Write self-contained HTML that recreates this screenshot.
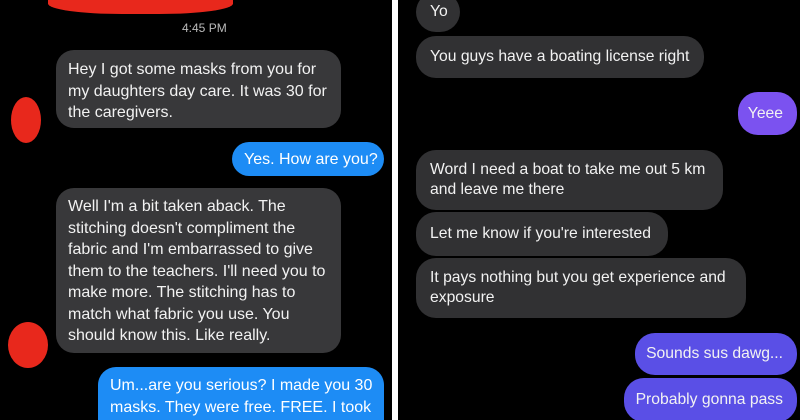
<!DOCTYPE html>
<html><head><style>
body{margin:0;width:800px;height:420px;overflow:hidden;background:#fff;font-family:"Liberation Sans",sans-serif;position:relative}
.p{position:absolute;top:0;height:420px;background:#000;overflow:hidden}
.b{position:absolute;color:#f2f2f2;font-size:15.7px;line-height:21.5px;box-sizing:border-box;white-space:nowrap}
.g{background:#38383a;border-radius:18px;padding:9px 12px;font-size:16px}
.bl{background:#1d8cf5;border-radius:18px;padding:6px 12px;color:#fff;font-size:16px}
.pg{background:#313133;border-radius:20px;padding:0 14px;display:flex;align-items:center}
.pu{background:#5a4fe6;border-radius:20px;padding:0 14px;display:flex;align-items:center;justify-content:flex-end}
.red{position:absolute;background:#e8281c;border-radius:50%}
</style></head><body>
<div class="p" style="left:0;width:392px">
 <div class="red" style="left:48px;top:-12px;width:185px;height:26px;border-radius:40%"></div>
 <div style="position:absolute;left:182px;top:21px;color:#bbb;font-size:12px">4:45 PM</div>
 <div class="b g" style="left:56px;top:50px;width:285px;height:78px">Hey I got some masks from you for<br>my daughters day care. It was 30 for<br>the caregivers.</div>
 <div class="red" style="left:11px;top:97px;width:30px;height:46px"></div>
 <div class="b bl" style="left:232px;top:142px;width:152px;height:34px;padding-top:7px">Yes. How are you?</div>
 <div class="b g" style="left:56px;top:188px;width:285px;height:165px;padding-top:8px">Well I'm a bit taken aback. The<br>stitching doesn't compliment the<br>fabric and I'm embarrassed to give<br>them to the teachers. I'll need you to<br>make more. The stitching has to<br>match what fabric you use. You<br>should know this. Like really.</div>
 <div class="red" style="left:8px;top:322px;width:40px;height:46px"></div>
 <div class="b bl" style="left:98px;top:367px;width:286px;height:70px;padding-top:8px">Um...are you serious? I made you 30<br>masks. They were free. FREE. I took</div>
</div>
<div class="p" style="left:398px;width:402px">
 <div class="b pg" style="left:18px;top:-8px;width:44px;height:40px">Yo</div>
 <div class="b pg" style="left:18px;top:36px;width:288px;height:42px">You guys have a boating license right</div>
 <div class="b pu" style="left:340px;top:92px;width:59px;height:43px;background:#7b52f0">Yeee</div>
 <div class="b pg" style="left:18px;top:150px;width:307px;height:60px;line-height:20px">Word I need a boat to take me out 5 km<br>and leave me there</div>
 <div class="b pg" style="left:18px;top:212px;width:252px;height:44px">Let me know if you're interested</div>
 <div class="b pg" style="left:18px;top:258px;width:330px;height:60px;line-height:20px">It pays nothing but you get experience and<br>exposure</div>
 <div class="b pu" style="left:237px;top:333px;width:162px;height:42px">Sounds sus dawg...</div>
 <div class="b pu" style="left:226px;top:378px;width:173px;height:44px">Probably gonna pass</div>
</div>
</body></html>
